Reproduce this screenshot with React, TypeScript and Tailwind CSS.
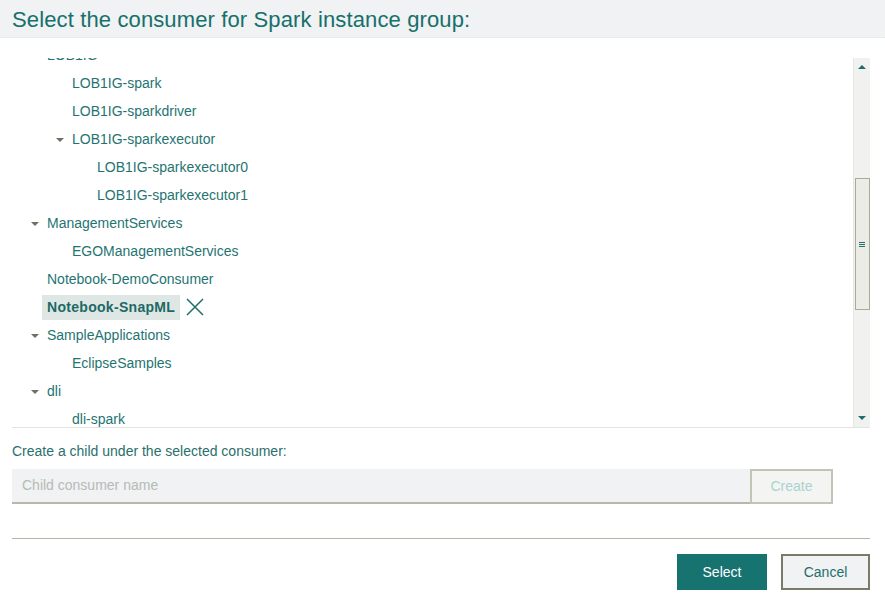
import React from 'react';

type Node = {
  label: string;
  level: number;
  expanded?: boolean;
  selected?: boolean;
};

const nodes: Node[] = [
  { label: 'LOB1IG', level: 1, expanded: true },
  { label: 'LOB1IG-spark', level: 2 },
  { label: 'LOB1IG-sparkdriver', level: 2 },
  { label: 'LOB1IG-sparkexecutor', level: 2, expanded: true },
  { label: 'LOB1IG-sparkexecutor0', level: 3 },
  { label: 'LOB1IG-sparkexecutor1', level: 3 },
  { label: 'ManagementServices', level: 1, expanded: true },
  { label: 'EGOManagementServices', level: 2 },
  { label: 'Notebook-DemoConsumer', level: 1 },
  { label: 'Notebook-SnapML', level: 1, selected: true },
  { label: 'SampleApplications', level: 1, expanded: true },
  { label: 'EclipseSamples', level: 2 },
  { label: 'dli', level: 1, expanded: true },
  { label: 'dli-spark', level: 2 },
];

const indent: Record<number, string> = {
  1: 'pl-[35px]',
  2: 'pl-[60px]',
  3: 'pl-[85px]',
};

function TreeRow({ node }: { node: Node }) {
  return (
    <div className={`relative h-[28px] flex items-center ${indent[node.level]}`}>
      {node.expanded && (
        <span className="absolute -ml-[16px] mt-[1px] w-0 h-0 border-l-[4px] border-r-[4px] border-t-[4px] border-l-transparent border-r-transparent border-t-[#6f6f63]" />
      )}
      {node.selected ? (
        <>
          <span className="-ml-[5px] px-[5px] h-[25px] flex items-center bg-[#dfe7e4] font-bold tracking-[0.3px] text-[#1d6966]">
            {node.label}
          </span>
          <svg width="18" height="18" viewBox="0 0 18 18" className="ml-[6px]">
            <path d="M1 1 L17 17 M17 1 L1 17" stroke="#1d6e6b" strokeWidth="1.5" fill="none" />
          </svg>
        </>
      ) : (
        <span className="text-[#1f7472]">{node.label}</span>
      )}
    </div>
  );
}

function Scrollbar() {
  return (
    <div className="w-[17px] shrink-0 flex flex-col items-center bg-[#f1f1ef] border-l border-[#e6e6e2]">
      <div className="h-[18px] flex items-center justify-center">
        <span className="w-0 h-0 border-l-[4px] border-r-[4px] border-b-[4px] border-l-transparent border-r-transparent border-b-[#1f6e6b]" />
      </div>
      <div className="h-[102px]" />
      <div className="w-[15px] h-[132px] bg-[#ecece6] border border-[#a9a99c] flex items-center justify-center">
        <div className="flex flex-col gap-[1px]">
          <span className="block w-[6px] h-[1px] bg-[#2f6d69]" />
          <span className="block w-[6px] h-[1px] bg-[#2f6d69]" />
          <span className="block w-[6px] h-[1px] bg-[#2f6d69]" />
        </div>
      </div>
      <div className="flex-1" />
      <div className="h-[18px] flex items-center justify-center">
        <span className="w-0 h-0 border-l-[4px] border-r-[4px] border-t-[4px] border-l-transparent border-r-transparent border-t-[#1f6e6b]" />
      </div>
    </div>
  );
}

export default function App() {
  return (
    <div className="w-[885px] h-[598px] bg-white font-[family-name:Liberation_Sans,Arial,sans-serif] overflow-hidden">
      <div className="h-[38px] bg-[#f0f2f3] border-b border-dotted border-[#e2e4e4] flex items-center px-[12px]">
        <h2 className="text-[22px] tracking-[0.13px] text-[#16706c] leading-none pt-[2px]">
          Select the consumer for Spark instance group:
        </h2>
      </div>

      <div className="mt-[20px] ml-[12px] mr-[15px] h-[370px] flex border-b border-[#e3e3e0]">
        <div className="flex-1 overflow-hidden text-[14px]">
          <div className="-mt-[17px]">
            {nodes.map((n) => (
              <TreeRow key={n.label} node={n} />
            ))}
          </div>
        </div>
        <Scrollbar />
      </div>

      <div className="px-[12px]">
        <p className="mt-[15px] text-[14px] leading-[16px] text-[#2a6f6c]">Create a child under the selected consumer:</p>
        <div className="mt-[10px] flex">
          <div className="w-[738px] h-[35px] bg-[#f0f2f3] border-b-2 border-[#b8b8aa] flex items-center px-[10px] text-[14px] text-[#b3bcb6]">
            Child consumer name
          </div>
          <button className="w-[83px] h-[35px] border-2 border-[#c4c4b6] bg-[#f4f4f2] text-[14px] text-[#a9d3d1]">
            Create
          </button>
        </div>
        <div className="mt-[34px] w-[858px] border-t border-[#b6b6a6]" />
        <div className="mt-[15px] w-[858px] flex justify-end gap-[14px]">
          <button className="w-[90px] h-[36px] bg-[#177370] text-white text-[14px]">Select</button>
          <button className="w-[89px] h-[36px] bg-[#f0f2f3] border-2 border-[#7a7a6a] text-[#1f6e6b] text-[14px]">
            Cancel
          </button>
        </div>
      </div>
    </div>
  );
}
